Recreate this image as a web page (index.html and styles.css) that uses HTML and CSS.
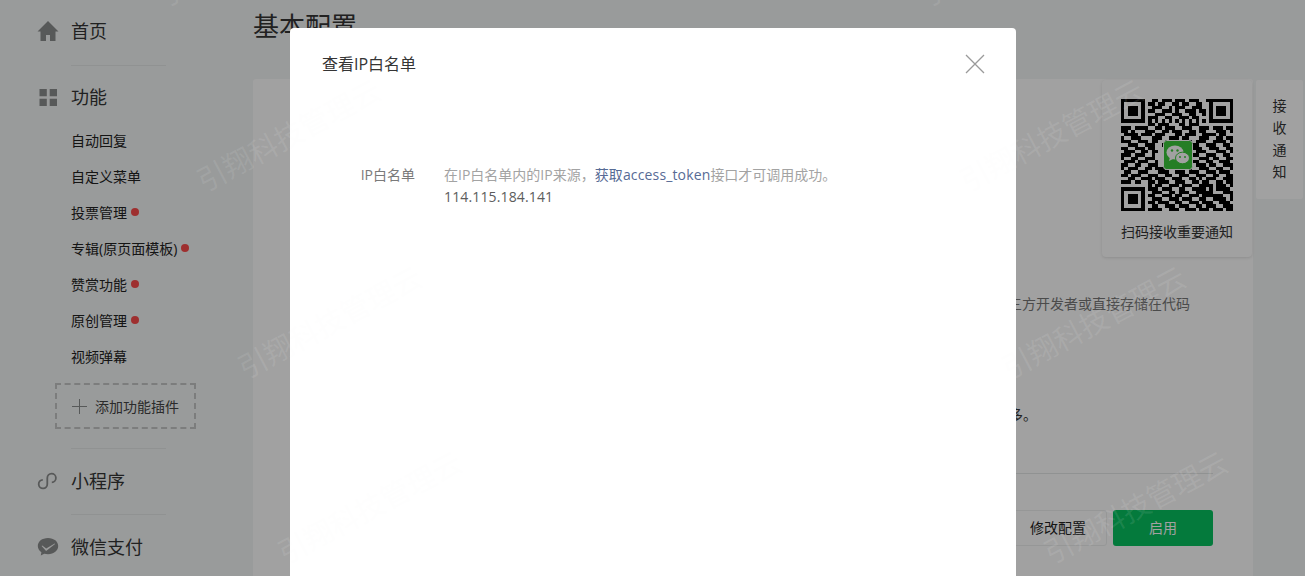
FILE: index.html
```html
<!DOCTYPE html>
<html lang="zh-CN">
<head>
<meta charset="utf-8">
<title>基本配置</title>
<link rel="stylesheet" href="styles.css">
</head>
<body>
<div class="page">
  <nav class="sidebar">
    <div class="nav-head">
      <svg class="nav-icon" viewBox="0 0 22 20"><path d="M11 0 .5 10.500h3V20h5.500v-6h4v6h5.500v-9.500h3z"/></svg>
      <span>首页</span>
    </div>
    <div class="nav-rule rule-home"></div>
    <div class="nav-head">
      <svg class="nav-icon" viewBox="0 0 22 20"><path d="M2.500 2h7.300v7.300H2.500zM12.700 2H20v7.300h-7.300zM2.500 11.700h7.300V19H2.500zM12.700 11.700H20V19h-7.300z"/></svg>
      <span>功能</span>
    </div>
    <ul class="sub-list">
      <li>自动回复</li>
      <li>自定义菜单</li>
      <li>投票管理<i class="dot"></i></li>
      <li>专辑(原页面模板)<i class="dot"></i></li>
      <li>赞赏功能<i class="dot"></i></li>
      <li>原创管理<i class="dot"></i></li>
      <li>视频弹幕</li>
    </ul>
    <div class="add-plugin">
      <svg class="plus" viewBox="0 0 15 15"><path d="M7.500 0v15M0 7.500h15"/></svg>
      <span>添加功能插件</span>
    </div>
    <div class="nav-rule rule-mini"></div>
    <div class="nav-head">
      <svg class="nav-icon" viewBox="0 0 22 20"><path class="line-icon" d="M5.800 8.800a4.300 4.300 0 1 0 4.500 4.200V7a4.300 4.300 0 1 1 4.500 4.300"/></svg>
      <span>小程序</span>
    </div>
    <div class="nav-rule rule-pay"></div>
    <div class="nav-head">
      <svg class="nav-icon" viewBox="0 0 22 20"><path d="M11 1C5 1 .8 4.600.8 9c0 2.500 1.400 4.700 3.600 6.200L3.800 18.600l3.400-1.900c1.200.3 2.500.5 3.800.5 6 0 10.200-3.600 10.200-8.100S17 1 11 1zM9.200 11.600 5.300 8.400l-.7.500 4.500 5.200 9-7.200-.4-.5z" fill-rule="evenodd"/></svg>
      <span>微信支付</span>
    </div>
  </nav>

  <main class="main">
    <h1 class="page-title">基本配置</h1>
    <section class="panel">
      <p class="bg-note">切记勿把密码直接交给第三方开发者或直接存储在代码</p>
      <p class="bg-note-dark">了解更多。</p>
      <div class="bg-rule"></div>
      <div class="bg-actions">
        <span class="btn btn-plain">修改配置</span>
        <span class="btn btn-green">启用</span>
      </div>
    </section>
  </main>

  <aside class="notice">
    <div class="qr-card">
      <div class="qr-box">
        <svg id="qr" class="qr" viewBox="0 0 33 33" shape-rendering="crispEdges"></svg>
        <svg class="qr-logo" viewBox="0 0 30 30">
          <rect x=".5" y=".5" width="29" height="29" rx="3" class="logo-bg"/>
          <ellipse cx="12" cy="12.500" rx="8.500" ry="7" class="logo-bubble"/>
          <path d="m7 17-1 4 4-2z" class="logo-bubble"/>
          <ellipse cx="19.500" cy="18" rx="7" ry="5.800" class="logo-bubble logo-front"/>
          <circle cx="9" cy="10.500" r="1.200" class="logo-eye"/>
          <circle cx="14.500" cy="10.500" r="1.200" class="logo-eye"/>
          <circle cx="17" cy="17" r="1" class="logo-eye"/>
          <circle cx="22" cy="17" r="1" class="logo-eye"/>
        </svg>
      </div>
      <div class="qr-text">扫码接收重要通知</div>
    </div>
    <div class="notice-tab">接<br>收<br>通<br>知</div>
  </aside>

  <div class="mask">
    <div class="dialog">
      <header class="dialog-head">
        <h2 class="dialog-title">查看IP白名单</h2>
        <svg class="dialog-close" viewBox="0 0 20 20"><path d="M1 1l18 18M19 1 1 19"/></svg>
      </header>
      <div class="field">
        <label class="field-label">IP白名单</label>
        <div class="field-body">
          <p class="field-tip">在IP白名单内的IP来源，<a class="field-link">获取access_token</a>接口才可调用成功。</p>
          <p class="field-value">114.115.184.141</p>
        </div>
      </div>
    </div>
  </div>

  <div class="wm wm-1">引翔科技管理云</div>
  <div class="wm wm-2">引翔科技管理云</div>
  <div class="wm wm-3">引翔科技管理云</div>
  <div class="wm wm-4">引翔科技管理云</div>
  <div class="wm wm-5">引翔科技管理云</div>
  <div class="wm wm-6">引翔科技管理云</div>
  <div class="wm wm-7">引翔科技管理云</div>
  <div class="wm wm-8">引翔科技管理云</div>
</div>
<script src="qr.js"></script>
</body>
</html>
```
FILE: styles.css
```css
* { box-sizing: border-box; }
html, body { margin: 0; padding: 0; height: 100%; overflow: hidden; }
body {
  font-family: "Open Sans", "Noto Sans CJK SC", sans-serif;
  color: #353535;
  background: #f3f5f5;
}
p, h1, h2, ul { margin: 0; padding: 0; font-weight: 400; }
ul { list-style: none; }

.page { position: relative; display: flex; width: 1305px; height: 576px; overflow: hidden; }

/* sidebar */
.sidebar { flex: none; width: 253px; padding-top: 13px; }
.nav-head {
  display: flex; align-items: center; gap: 12px;
  height: 36px; padding-left: 37px;
  font-size: 18px; line-height: 36px; color: #353535;
}
.nav-icon { width: 22px; height: 20px; fill: #8b8d8d; flex: none; }
.line-icon { fill: none; stroke: #8b8d8d; stroke-width: 1.800; }
.nav-rule { width: 95px; height: 1px; margin: 16px 0 14px 71px; background: #e4e7e7; }
.rule-home { margin-bottom: 13px; }
.sub-list { margin-top: 7px; padding-left: 71px; }
.sub-list li { display: flex; align-items: center; height: 36px; font-size: 14px; color: #222; }
.dot { width: 8px; height: 8px; margin-left: 4px; border-radius: 50%; background: #fa4b4b; }
.add-plugin {
  display: flex; align-items: center; gap: 8px;
  width: 141px; height: 46px; margin: 9px 0 0 55px; padding-left: 15px;
  border: 2px dashed #c4c6c6; font-size: 14px; color: #444;
}
.add-plugin span { white-space: nowrap; }
.plus { width: 15px; height: 15px; flex: none; fill: none; stroke: #8b8d8d; stroke-width: 1; }
.rule-mini { margin: 19px 0 14px 71px; }
.rule-pay { margin: 15px 0 14px 71px; }

/* main */
.main { flex: none; width: 1000px; }
.page-title { height: 79px; padding-top: 9px; font-size: 26px; line-height: 34px; color: #353535; }
.panel { height: 497px; padding-top: 214px; background: #fff; border-radius: 3px 3px 0 0; }
.bg-note { padding-right: 63px; text-align: right; font-size: 14px; line-height: 22px; color: #777; white-space: nowrap; }
.bg-note-dark { margin-top: 89px; padding-right: 216px; text-align: right; font-size: 14px; line-height: 22px; color: #353535; }
.bg-rule { height: 1px; margin: 47px 40px 0 100px; background: #e4e7e7; }
.bg-actions { display: flex; justify-content: flex-end; gap: 6px; margin: 36px 40px 0 0; }
.btn { display: block; height: 36px; border-radius: 3px; font-size: 14px; line-height: 36px; text-align: center; }
.btn-plain { width: 98px; border: 1px solid #eef0f0; line-height: 34px; color: #222; }
.btn-green { width: 100px; background: #07c160; color: #fff; }

/* floating notice */
.notice { position: absolute; top: 80px; right: 2px; display: flex; gap: 4px; align-items: flex-start; }
.qr-card {
  width: 150px; height: 177px; padding: 19px 19px 0; border-radius: 4px;
  background: #fff; box-shadow: 0 1px 3px rgba(0,0,0,.12);
}
.qr-box { position: relative; width: 112px; height: 112px; }
.qr { display: block; width: 112px; height: 112px; }
.qr-logo { position: absolute; top: 41px; left: 42px; width: 30px; height: 30px; }
.logo-bg { fill: #3cc83c; stroke: #fff; }
.logo-bubble { fill: #fff; }
.logo-front { stroke: #3cc83c; stroke-width: 1; }
.logo-eye { fill: #3cc83c; }
.qr-text { margin-top: 11px; font-size: 14px; line-height: 20px; white-space: nowrap; color: #353535; }
.notice-tab {
  width: 47px; height: 119px; padding-top: 15px; border-radius: 2px;
  background: #fff; text-align: center; font-size: 14px; line-height: 22px; color: #353535;
}

/* dialog */
.mask { position: absolute; inset: 0; padding: 28px 289px 0 290px; background: rgba(0,0,0,.37); }
.dialog { height: 560px; background: #fff; border-radius: 4px 4px 0 0; }
.dialog-head { display: flex; justify-content: space-between; align-items: center; height: 72px; padding: 0 31px 0 32px; }
.dialog-title { font-size: 16px; line-height: 24px; color: #353535; }
.dialog-close { width: 20px; height: 20px; fill: none; stroke: #9a9a9a; stroke-width: 1.300; }
.field { display: flex; padding-top: 64px; font-size: 14px; line-height: 22px; }
.field-label { flex: none; width: 125px; text-align: right; color: #7a7a7a; }
.field-body { margin-left: 29px; }
.field-tip { color: #a3a3a3; }
.field-link { color: #576b95; letter-spacing: .14px; }
.field-value { color: #5c5c5c; letter-spacing: .14px; }

/* watermark */
.wm {
  position: absolute; transform-origin: 0 50%; transform: rotate(-28deg);
  font-size: 29px; line-height: 36px; white-space: nowrap;
  color: rgba(248,248,248,.1); pointer-events: none;
}
.wm-1 { left: 199px; top: 165px; }
.wm-2 { left: 240px; top: 352px; }
.wm-3 { left: 280px; top: 537px; }
.wm-4 { left: 160px; top: -20px; }
.wm-5 { left: 962px; top: 165px; }
.wm-6 { left: 1004px; top: 352px; }
.wm-7 { left: 1046px; top: 537px; }
.wm-8 { left: 922px; top: -20px; }
```
FILE: qr.js
```js
var rows = [
  "111111100110111011101110011111111",
  "100000101101100110110011001000001",
  "101110100111001011100111001011101",
  "101110101100111010011101101011101",
  "101110100011100111001100101011101",
  "100000101110011001110110001000001",
  "111111101010101010101010101111111",
  "000000001101110001101110000000000",
  "111011110011011100111001110111011",
  "110100011100110111001101100011101",
  "011110111011100011011100111101100",
  "100111000111001110110001110011011",
  "111001110110011100011011100111101",
  "001110011100111000001110011100110",
  "110011101100000000000111001110011",
  "011100110110000000000011100011101",
  "111011100100000000000110011100110",
  "100110011100000000000001110110011",
  "011101110010000000001110011001110",
  "110011001110000000000011101100111",
  "101110011011100111011001110011001",
  "011001110001110011101110011101110",
  "110111001110011001110011100110011",
  "001100111011100111001101011100111",
  "111011001101110011100110110011011",
  "000000001011001110111001111011101",
  "111111101110111001100111101011110",
  "100000100111001101110011111000111",
  "101110101100111011001110111111001",
  "101110100111001110111001100111101",
  "101110101101110011001110111001110",
  "100000100110011101110011011100111",
  "111111101111001110011101110111011"
];
var svg = document.getElementById("qr");
var ns = "http://www.w3.org/2000/svg";
rows.forEach(function (row, y) {
  for (var x = 0; x < row.length; x++) {
    if (row[x] === "1") {
      var r = document.createElementNS(ns, "rect");
      r.setAttribute("x", x);
      r.setAttribute("y", y);
      r.setAttribute("width", 1);
      r.setAttribute("height", 1);
      svg.appendChild(r);
    }
  }
});
```
